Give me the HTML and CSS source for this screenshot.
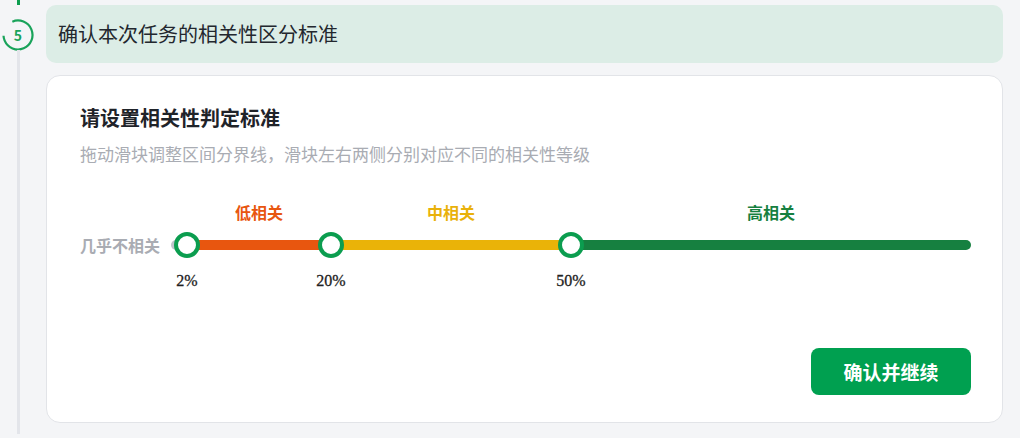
FILE: index.html
```html
<!DOCTYPE html>
<html lang="zh-CN">
<head>
    <meta charset="UTF-8">
    <title>相关性区分标准</title>
    <link rel="stylesheet" href="styles.css">
</head>
<body>
  <div class="step">
    <div class="rail">
      <div class="rail-top"></div>
      <div class="step-num">
        <svg width="32" height="32" viewBox="0 0 32 32">
          <circle cx="16" cy="16" r="14.5" fill="none" stroke="#19a35a" stroke-width="2.2"
                  stroke-dasharray="73 18.1" transform="rotate(-113 16 16)"/>
        </svg>
        <span>5</span>
      </div>
      <div class="rail-line"></div>
    </div>

    <div class="step-body">
      <div class="step-head">确认本次任务的相关性区分标准</div>

      <div class="card">
        <h2 class="card-title">请设置相关性判定标准</h2>
        <p class="card-desc">拖动滑块调整区间分界线，滑块左右两侧分别对应不同的相关性等级</p>

        <div class="scale">
          <div class="zones">
            <span class="zone low" style="left: 11%">低相关</span>
            <span class="zone mid" style="left: 35%">中相关</span>
            <span class="zone high" style="left: 75%">高相关</span>
          </div>

          <div class="scale-row">
            <div class="none-label">几乎不相关</div>
            <div class="track">
              <div class="bar">
                <div class="seg grey" style="width: 2%"></div>
                <div class="seg orange" style="width: 18%"></div>
                <div class="seg yellow" style="width: 30%"></div>
                <div class="seg green" style="width: 50%"></div>
              </div>
              <div class="handle" style="left: 2%"></div>
              <div class="handle" style="left: 20%"></div>
              <div class="handle" style="left: 50%"></div>
            </div>
          </div>

          <div class="values">
            <span class="value" style="left: 2%">2%</span>
            <span class="value" style="left: 20%">20%</span>
            <span class="value" style="left: 50%">50%</span>
          </div>
        </div>

        <div class="actions">
          <button class="btn" type="button">确认并继续</button>
        </div>
      </div>
    </div>
  </div>
</body>
</html>
```

FILE: styles.css
```css
body{
  margin: 0;
  background: #f4f5f7;
  font-family: "Noto Sans CJK SC", "Noto Sans", sans-serif;
  color: #1f2329;
}

.step{
  display: flex;
  padding: 5px 17px 15px 0;
  height: 418px;
}

.rail{
  width: 46px;
  position: relative;
}
.rail-top{
  position: absolute;
  left: 17px;
  top: -5px;
  width: 3px;
  height: 5px;
  background: #0d9d4f;
}
.rail-line{
  position: absolute;
  left: 17px;
  top: 45px;
  bottom: -11px;
  width: 3px;
  background: #e3e5ea;
}
.step-num{
  position: absolute;
  left: 2px;
  top: 14px;
  width: 32px;
  height: 32px;
}
.step-num svg{
  display: block;
}
.step-num span{
  position: absolute;
  inset: 0;
  text-align: center;
  line-height: 32px;
  font-size: 14px;
  font-weight: 700;
  color: #19a35a;
}

.step-body{
  flex: 1;
  display: flex;
  flex-direction: column;
  gap: 12px;
}

.step-head{
  height: 58px;
  background: #dcede6;
  border-radius: 10px;
  padding: 0 12px;
  display: flex;
  align-items: center;
  font-size: 20px;
  color: #23272e;
}

.card{
  background: #fff;
  border: 1px solid #e2e4e8;
  border-radius: 14px;
  padding: 29px 31px 27px 33px;
  height: 292px;
}
.card-title{
  margin: 0;
  font-size: 20px;
  line-height: 26px;
  font-weight: 700;
  color: #1f2329;
}
.card-desc{
  margin: 11px 0 0;
  font-size: 17px;
  line-height: 24px;
  color: #a9acb3;
}

.scale{
  margin-top: 35px;
}
.zones, .values{
  position: relative;
  margin-left: 91px;
  width: 800px;
  height: 22px;
}
.zone{
  position: absolute;
  top: 0;
  transform: translateX(-50%);
  font-size: 16px;
  line-height: 22px;
  font-weight: 700;
  white-space: nowrap;
}
.low{ color: #e8560f; }
.mid{ color: #e9b10a; }
.high{ color: #168040; }

.scale-row{
  display: flex;
  align-items: center;
  height: 44px;
}
.none-label{
  width: 91px;
  font-size: 16px;
  font-weight: 700;
  color: #a9acb3;
}
.track{
  position: relative;
  width: 800px;
  height: 10px;
}
.bar{
  display: flex;
  height: 10px;
  border-radius: 5px;
  overflow: hidden;
}
.seg{
  height: 100%;
}
.grey{ background: #c0c4cc; }
.orange{ background: #e8560f; }
.yellow{ background: #eab308; }
.green{ background: #168040; }

.handle{
  position: absolute;
  top: 50%;
  width: 18px;
  height: 18px;
  border: 4px solid #0b9d4f;
  border-radius: 50%;
  background: #fff;
  transform: translate(-50%, -50%);
}

.values{
  margin-top: 3px;
}
.value{
  position: absolute;
  top: 0;
  transform: translateX(-50%);
  font-family: "Liberation Serif", serif;
  font-size: 16px;
  line-height: 22px;
  color: #222;
  -webkit-text-stroke: 0.3px #222;
}

.actions{
  display: flex;
  justify-content: flex-end;
  margin-top: 56px;
}
.btn{
  width: 160px;
  height: 47px;
  border: none;
  border-radius: 8px;
  background: #00a050;
  color: #fff;
  font-family: inherit;
  font-size: 19px;
  font-weight: 700;
}
```
